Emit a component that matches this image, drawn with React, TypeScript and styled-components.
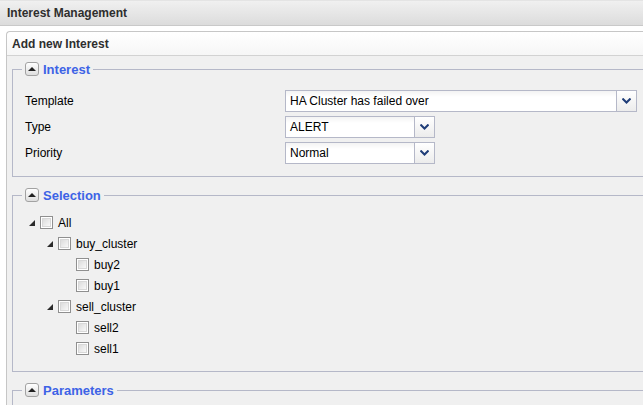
import React from "react";
import styled, { createGlobalStyle } from "styled-components";

const Global = createGlobalStyle`
  html, body { margin: 0; padding: 0; background: #ffffff; overflow: hidden; }
  body { font-family: "Liberation Sans", Arial, sans-serif; font-size: 12px; color: #000; }
`;

const Page = styled.div`
  width: 643px;
  height: 405px;
  overflow: hidden;
  background: #ffffff;
`;

const TitleBar = styled.div`
  height: 24px;
  display: flex;
  align-items: center;
  padding-left: 7px;
  border-top: 1px solid #e4e4e4;
  border-bottom: 1px solid #c9c9c9;
  background: linear-gradient(#f0f0f0, #dcdcdc);
  font-weight: bold;
  font-size: 12px;
  color: #2e2e2e;
`;

const Panel = styled.div`
  margin: 5px -40px 0 6px;
  border: 1px solid #c6c6c6;
  border-right: none;
  border-radius: 4px 0 0 0;
  background: #f0f0f0;
  min-height: 400px;
`;

const PanelHeader = styled.div`
  height: 23px;
  display: flex;
  align-items: center;
  padding-left: 5px;
  border-bottom: 1px solid #d2d2d2;
  border-radius: 4px 0 0 0;
  background: linear-gradient(#ffffff, #f6f6f6);
  font-weight: bold;
  color: #2e2e2e;
`;

const PanelBody = styled.div`
  padding: 5px 0 0 5px;
  display: flex;
  flex-direction: column;
  gap: 10px;
`;

const Fieldset = styled.fieldset<{ $bottom: number; $top: number }>`
  margin: 0;
  border: 1px solid #b5b8c8;
  border-right: none;
  padding: ${(p) => p.$top}px 12px ${(p) => p.$bottom}px 12px;
  min-width: 0;
`;

const Legend = styled.legend`
  margin-left: -3px;
  padding: 0 3px;
  display: flex;
  align-items: center;
  gap: 4px;
  height: 16px;
  font-weight: bold;
  font-size: 13px;
  color: #3d63e6;
`;

const Toggle = styled.span`
  width: 12px;
  height: 12px;
  border: 1px solid #a2a2a2;
  border-radius: 3px;
  background: linear-gradient(#ffffff, #dedede);
  display: flex;
  align-items: center;
  justify-content: center;
  &::after {
    content: "";
    width: 0;
    height: 0;
    border-left: 4px solid transparent;
    border-right: 4px solid transparent;
    border-bottom: 4px solid #222;
    margin-top: -1px;
  }
`;

const FormGrid = styled.div`
  display: grid;
  grid-template-columns: 260px auto;
  row-gap: 4px;
  align-items: center;
`;

const Label = styled.span`
  font-size: 12px;
  color: #000;
`;

const Select = styled.div<{ $w: number }>`
  width: ${(p) => p.$w}px;
  height: 22px;
  box-sizing: border-box;
  border: 1px solid #b5b8c8;
  background: linear-gradient(#f3f3f3 0px, #ffffff 6px, #ffffff);
  display: flex;
  align-items: center;
`;

const SelectText = styled.span`
  flex: 1;
  padding-left: 4px;
  font-size: 12px;
  color: #000;
`;

const Trigger = styled.span`
  width: 19px;
  height: 100%;
  border-left: 1px solid #b5b8c8;
  background: linear-gradient(#ffffff, #ececec);
  display: flex;
  align-items: center;
  justify-content: center;
`;

const Tree = styled.div`
  display: flex;
  flex-direction: column;
`;

const TreeRow = styled.div<{ $level: number }>`
  height: 21px;
  display: flex;
  align-items: center;
  padding-left: ${(p) => p.$level * 18}px;
`;

const Elbow = styled.span`
  width: 14px;
  height: 16px;
  display: flex;
  align-items: center;
  justify-content: center;
`;

const Check = styled.span`
  width: 13px;
  height: 13px;
  box-sizing: border-box;
  border: 1px solid #8f8f8f;
  padding: 1px;
  background: #fff;
  margin-left: 1px;
  &::after {
    content: "";
    display: block;
    width: 100%;
    height: 100%;
    box-sizing: border-box;
    border: 1px solid #d8d8d8;
    background: linear-gradient(135deg, #dcdcdc, #f8f8f8);
  }
`;

const TreeText = styled.span`
  margin-left: 5px;
  font-size: 12px;
  color: #000;
`;

const Chevron = () => (
  <svg width="9" height="6" viewBox="0 0 9 6">
    <path d="M0.5 0.5 L4.5 4.5 L8.5 0.5" fill="none" stroke="#1f3d78" strokeWidth="2" />
  </svg>
);

const ElbowArrow = () => (
  <svg width="6" height="6" viewBox="0 0 6 6">
    <polygon points="6,0 6,6 0,6" fill="#2a2a2a" />
  </svg>
);

type Node = { label: string; level: number; parent: boolean };

const nodes: Node[] = [
  { label: "All", level: 0, parent: true },
  { label: "buy_cluster", level: 1, parent: true },
  { label: "buy2", level: 2, parent: false },
  { label: "buy1", level: 2, parent: false },
  { label: "sell_cluster", level: 1, parent: true },
  { label: "sell2", level: 2, parent: false },
  { label: "sell1", level: 2, parent: false },
];

const fields = [
  { label: "Template", value: "HA Cluster has failed over", w: 352 },
  { label: "Type", value: "ALERT", w: 150 },
  { label: "Priority", value: "Normal", w: 150 },
];

export default function App() {
  return (
    <Page>
      <Global />
      <TitleBar>Interest Management</TitleBar>
      <Panel>
        <PanelHeader>Add new Interest</PanelHeader>
        <PanelBody>
          <Fieldset $top={13} $bottom={12}>
            <Legend>
              <Toggle />
              Interest
            </Legend>
            <FormGrid>
              {fields.map((f) => (
                <React.Fragment key={f.label}>
                  <Label>{f.label}</Label>
                  <Select $w={f.w}>
                    <SelectText>{f.value}</SelectText>
                    <Trigger>
                      <Chevron />
                    </Trigger>
                  </Select>
                </React.Fragment>
              ))}
            </FormGrid>
          </Fieldset>
          <Fieldset $top={9} $bottom={12}>
            <Legend>
              <Toggle />
              Selection
            </Legend>
            <Tree>
              {nodes.map((n) => (
                <TreeRow key={n.label} $level={n.level}>
                  <Elbow>{n.parent ? <ElbowArrow /> : null}</Elbow>
                  <Check />
                  <TreeText>{n.label}</TreeText>
                </TreeRow>
              ))}
            </Tree>
          </Fieldset>
          <Fieldset $top={10} $bottom={40}>
            <Legend>
              <Toggle />
              Parameters
            </Legend>
          </Fieldset>
        </PanelBody>
      </Panel>
    </Page>
  );
}
